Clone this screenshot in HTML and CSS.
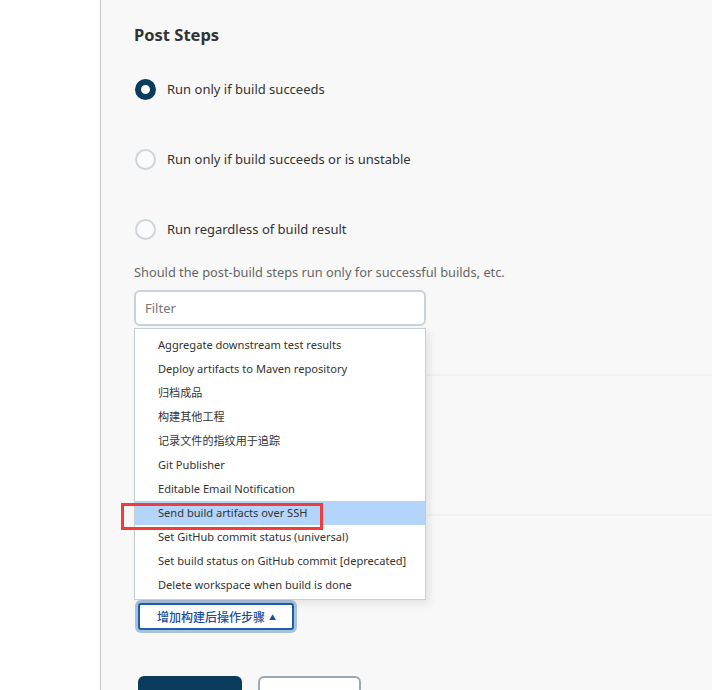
FILE: index.html
```html
<!DOCTYPE html>
<html lang="zh-CN">
<head>
    <meta charset="UTF-8">
    <meta name="viewport" content="width=device-width, initial-scale=1.0">
    <title>Post Steps</title>
    <link rel="stylesheet" href="styles.css">
</head>
<body>
    <div class="sidebar"></div>
    <div class="main">
        <h2 class="title">Post Steps</h2>

        <div class="radios">
            <label class="radio"><span class="dot checked"></span>Run only if build succeeds</label>
            <label class="radio"><span class="dot"></span>Run only if build succeeds or is unstable</label>
            <label class="radio"><span class="dot"></span>Run regardless of build result</label>
        </div>
        <p class="help">Should the post-build steps run only for successful builds, etc.</p>

        <div class="hidden-sections">
            <div class="divider first"></div>
            <div class="divider second"></div>

            <!-- popup du bouton -->
            <div class="popup">
                <input class="filter" type="text" placeholder="Filter">
                <ul class="menu">
                    <li>Aggregate downstream test results</li>
                    <li>Deploy artifacts to Maven repository</li>
                    <li>归档成品</li>
                    <li>构建其他工程</li>
                    <li>记录文件的指纹用于追踪</li>
                    <li>Git Publisher</li>
                    <li>Editable Email Notification</li>
                    <li class="active">Send build artifacts over SSH</li>
                    <li>Set GitHub commit status (universal)</li>
                    <li>Set build status on GitHub commit [deprecated]</li>
                    <li>Delete workspace when build is done</li>
                </ul>
                <div class="mark"></div>
            </div>
        </div>

        <button class="add-step">增加构建后操作步骤 <span class="caret">▲</span></button>

        <div class="actions">
            <button class="btn primary">保存</button>
            <button class="btn secondary">应用</button>
        </div>
    </div>
</body>
</html>
```

FILE: styles.css
```css
* {
    margin: 0;
    padding: 0;
    box-sizing: border-box;
}

body {
    display: flex;
    height: 690px;
    overflow: hidden;
    font-family: "Noto Sans", "Noto Sans CJK SC", sans-serif;
    color: #333;
    background: #fff;
}

.sidebar {
    width: 101px;
    flex-shrink: 0;
    background: #fff;
    border-right: 1px solid #c8cdd2;
}

.main {
    flex: 1;
    background: #f8f8f8;
    padding: 23px 0 0 33px;
}

.title {
    font-size: 16.5px;
    font-weight: 700;
    color: #333;
    line-height: 24px;
}

.radios {
    display: flex;
    flex-direction: column;
    gap: 46px;
    margin-top: 30px;
}

.radio {
    display: flex;
    align-items: center;
    gap: 11px;
    height: 24px;
    font-size: 13px;
    color: #333;
    padding-left: 1px;
}

.dot {
    width: 21px;
    height: 21px;
    border-radius: 50%;
    border: 2px solid #cdd5db;
    background: #fbfbfb;
}

.dot.checked {
    border: 6.5px solid #0b3b5d;
    background: #fff;
}

.help {
    font-size: 12.8px;
    color: #666;
    margin-top: 21px;
    line-height: 20px;
}

.hidden-sections {
    position: relative;
    height: 321px;
}

.divider {
    position: absolute;
    left: 0;
    right: 0;
    height: 2px;
    background: #f0f0f0;
}

.divider.first {
    top: 92px;
}

.divider.second {
    top: 232px;
}

.popup {
    position: absolute;
    top: 8px;
    left: 0;
    width: 292px;
}

.filter {
    display: block;
    width: 292px;
    height: 36px;
    border: 2px solid #c9d2d8;
    border-radius: 6px;
    background: #fff;
    padding: 0 9px;
    font-family: inherit;
    font-size: 13px;
    color: #333;
    outline: none;
}

.filter::placeholder {
    color: #777;
}

.menu {
    list-style: none;
    margin-top: 2px;
    background: #fff;
    border: 1px solid #c6ced4;
    box-shadow: 4px 4px 8px rgba(0, 0, 0, 0.08);
    padding: 4px 0 2px;
}

.menu li {
    height: 24px;
    line-height: 24px;
    padding-left: 23px;
    font-size: 11.1px;
    color: #333;
    white-space: nowrap;
}

.menu li.active {
    background: #b3d4fb;
}

.mark {
    position: absolute;
    top: 213px;
    left: -13px;
    width: 202px;
    height: 27px;
    border: 3px solid #f23b3b;
}

.add-step {
    display: flex;
    align-items: center;
    gap: 4px;
    margin-left: 4px;
    height: 27px;
    padding: 0 16px 0 17px;
    background: #fff;
    border: 2px solid #1f5db3;
    border-radius: 3px;
    box-shadow: 0 0 0 3px #a8c3dc;
    font-family: inherit;
    font-size: 12px;
    font-weight: 500;
    color: #1a4f9e;
}

.caret {
    font-size: 7px;
}

.actions {
    display: flex;
    gap: 16px;
    margin-top: 46px;
    margin-left: 4px;
}

.btn {
    width: 104px;
    height: 40px;
    border-radius: 6px;
    font-family: inherit;
    font-size: 13px;
    font-weight: 700;
}

.primary {
    background: #0b3b5d;
    border: none;
    color: #fff;
}

.secondary {
    width: 103px;
    background: #fff;
    border: 2px solid #9ba9b2;
    color: #333;
}
```
